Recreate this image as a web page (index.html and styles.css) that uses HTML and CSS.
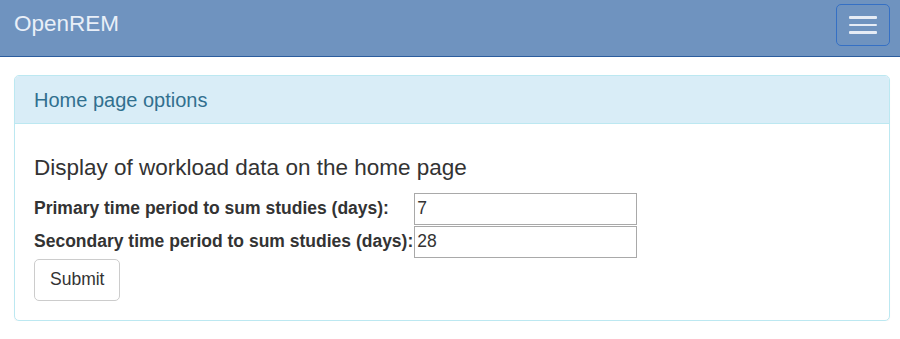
FILE: index.html
```html
<!DOCTYPE html>
<html lang="en">
<head>
    <meta charset="UTF-8">
    <meta name="viewport" content="width=device-width, initial-scale=1.0">
    <title>OpenREM - Home page options</title>
    <link rel="stylesheet" href="styles.css">
</head>
<body>
    <header class="navbar">
        <a class="brand" href="#">OpenREM</a>
        <button class="navbar-toggle" type="button">
            <span class="icon-bar"></span>
            <span class="icon-bar"></span>
            <span class="icon-bar"></span>
        </button>
    </header>

    <main class="container">
        <div class="panel">
            <div class="panel-heading">Home page options</div>
            <div class="panel-body">
                <h4>Display of workload data on the home page</h4>
                <form>
                    <table class="options-table">
                        <tr>
                            <th><label for="primary">Primary time period to sum studies (days):</label></th>
                            <td><input type="text" id="primary" value="7"></td>
                        </tr>
                        <tr>
                            <th><label for="secondary">Secondary time period to sum studies (days):</label></th>
                            <td><input type="text" id="secondary" value="28"></td>
                        </tr>
                    </table>
                    <button type="submit" class="btn">Submit</button>
                </form>
            </div>
        </div>
    </main>
</body>
</html>
```

FILE: styles.css
```css
body {
    margin: 0;
    font-family: "Liberation Sans", Arial, sans-serif;
    font-size: 17.5px;
    color: #333;
    background-color: #fff;
}

.navbar {
    display: flex;
    justify-content: space-between;
    align-items: flex-start;
    height: 56px;
    background-color: #6f93bf;
    border-bottom: 1px solid #2c5d9e;
    padding: 0 10px 0 14px;
}

.brand {
    color: #e9eff8;
    text-decoration: none;
    font-size: 22.5px;
    line-height: 25px;
    padding-top: 11px;
}

.navbar-toggle {
    margin-top: 4px;
    width: 54px;
    height: 42px;
    padding: 0;
    background: transparent;
    border: 1px solid #3570c4;
    border-radius: 5px;
    display: flex;
    flex-direction: column;
    align-items: center;
    justify-content: center;
    gap: 5px;
    cursor: pointer;
}

.icon-bar {
    display: block;
    width: 28px;
    height: 2.5px;
    background-color: #e6ecf5;
    border-radius: 1px;
}

.container {
    padding: 18px 10px 0 14px;
}

.panel {
    border: 1px solid #bce8f1;
    border-radius: 5px;
    box-shadow: 0 1px 1px rgba(0, 0, 0, 0.05);
}

.panel-heading {
    background-color: #d9edf7;
    color: #31708f;
    border-bottom: 1px solid #bce8f1;
    border-radius: 4px 4px 0 0;
    padding: 12.5px 19px;
    font-size: 20px;
    line-height: 22px;
}

.panel-body {
    padding: 19px;
}

.panel-body h4 {
    margin: 12.5px 0;
    font-size: 22.5px;
    font-weight: normal;
    line-height: 1.1;
}

.options-table {
    border-collapse: collapse;
}

.options-table th {
    text-align: left;
    font-weight: bold;
    padding: 0 1px 1px 0;
    vertical-align: middle;
}

.options-table td {
    padding: 0 0 1px 0;
}

.options-table input {
    box-sizing: border-box;
    width: 223px;
    height: 32px;
    padding: 1px 2px;
    border: 1px solid #a9a9a9;
    font-family: inherit;
    font-size: 17.5px;
    color: #333;
}

.btn {
    padding: 7.5px 15px;
    font-family: inherit;
    font-size: 17.5px;
    line-height: 25px;
    color: #333;
    background-color: #fff;
    border: 1px solid #ccc;
    border-radius: 5px;
    cursor: pointer;
}
```
